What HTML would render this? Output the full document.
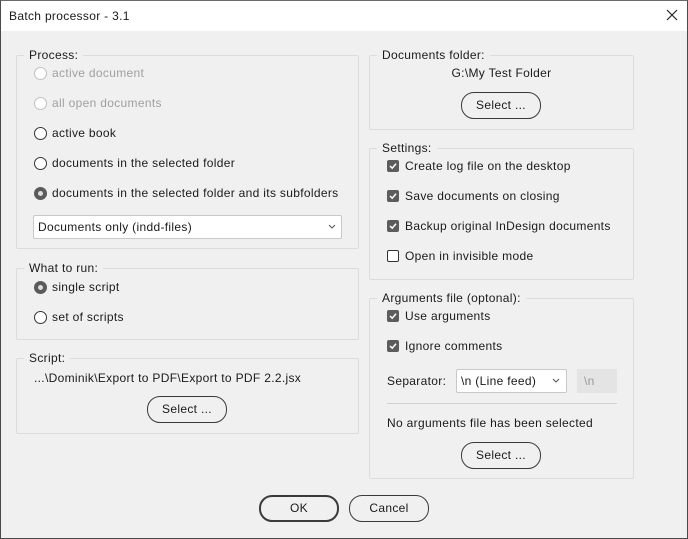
<!DOCTYPE html>
<html><head><meta charset="utf-8"><style>
*{box-sizing:border-box;margin:0;padding:0}
body{width:688px;height:539px;overflow:hidden;background:#f0f0f0;font-family:"Liberation Sans",sans-serif;font-size:12px;letter-spacing:0.32px;color:#1a1a1a;position:relative}
.win{position:absolute;left:0;top:0;width:688px;height:539px;border:1px solid #4a4a4a;border-top-color:#6a6a6a}
.title{position:absolute;left:1px;top:1px;width:686px;height:30px;background:#fff}
.t{position:absolute;white-space:nowrap;line-height:16px}
.box{position:absolute;border:1px solid #dcdcdc;border-radius:2px}
.lbl{position:absolute;background:#f0f0f0;padding:0 5px;line-height:16px;white-space:nowrap}
.rad{position:absolute;width:13px;height:13px;border:1px solid #333;border-radius:50%;background:#fff}
.rad.dis{border-color:#c0c0c0}
.rad.on{background:#5a5a5a;border-color:#5a5a5a}
.rad.on::after{content:"";position:absolute;left:3px;top:3px;width:5px;height:5px;border-radius:50%;background:#dcdcdc}
.chk{position:absolute;width:12px;height:12px;border-radius:2px;background:#5c5c5c}
.chk svg{position:absolute;left:1px;top:1px}
.chk.off{background:#fff;border:1px solid #333}
.btn{position:absolute;border:1px solid #3a3a3a;border-radius:13px;text-align:center;line-height:24px;background:#f0f0f0}
.dd{position:absolute;background:#fff;border:1px solid #c8c8c8;border-radius:2px;line-height:22px;padding-left:4px}
.dis{color:#a0a0a0}
</style></head><body>
<div class="win"></div>
<div class="title"></div>
<div class="t" style="left:9px;top:8px">Batch processor - 3.1</div>
<svg style="position:absolute;left:666px;top:9px" width="12" height="12"><path d="M1 1L11 11M11 1L1 11" stroke="#222" stroke-width="1.2"/></svg>

<div class="box" style="left:16px;top:55px;width:343px;height:194px"></div>
<div class="lbl" style="left:24px;top:47px">Process:</div>
<div class="rad dis" style="left:34px;top:67px"></div><div class="t dis" style="left:52px;top:65px">active document</div>
<div class="rad dis" style="left:34px;top:97px"></div><div class="t dis" style="left:52px;top:95px">all open documents</div>
<div class="rad" style="left:34px;top:127px"></div><div class="t" style="left:52px;top:125px">active book</div>
<div class="rad" style="left:34px;top:157px"></div><div class="t" style="left:52px;top:155px">documents in the selected folder</div>
<div class="rad on" style="left:34px;top:187px"></div><div class="t" style="left:52px;top:185px">documents in the selected folder and its subfolders</div>
<div class="dd" style="left:33px;top:215px;width:309px;height:24px">Documents only (indd-files)</div>
<svg style="position:absolute;left:328px;top:224px" width="8" height="6"><path d="M1 1L4 4L7 1" stroke="#555" fill="none"/></svg>

<div class="box" style="left:16px;top:268px;width:343px;height:72px"></div>
<div class="lbl" style="left:24px;top:260px">What to run:</div>
<div class="rad on" style="left:34px;top:281px"></div><div class="t" style="left:52px;top:279px">single script</div>
<div class="rad" style="left:34px;top:311px"></div><div class="t" style="left:52px;top:309px">set of scripts</div>

<div class="box" style="left:16px;top:358px;width:343px;height:76px"></div>
<div class="lbl" style="left:24px;top:350px">Script:</div>
<div class="t" style="left:34px;top:370px">...\Dominik\Export to PDF\Export to PDF 2.2.jsx</div>
<div class="btn" style="left:147px;top:396px;width:80px;height:27px">Select ...</div>

<div class="box" style="left:369px;top:55px;width:265px;height:75px"></div>
<div class="lbl" style="left:377px;top:47px">Documents folder:</div>
<div class="t" style="left:369px;width:265px;text-align:center;top:65px">G:\My Test Folder</div>
<div class="btn" style="left:461px;top:92px;width:80px;height:27px">Select ...</div>

<div class="box" style="left:369px;top:148px;width:265px;height:132px"></div>
<div class="lbl" style="left:377px;top:140px">Settings:</div>
<div class="chk" style="left:387px;top:160px"><svg width="10" height="10"><path d="M2 5L4.2 7.2L8 2.8" stroke="#fff" stroke-width="1.5" fill="none"/></svg></div><div class="t" style="left:405px;top:158px">Create log file on the desktop</div>
<div class="chk" style="left:387px;top:190px"><svg width="10" height="10"><path d="M2 5L4.2 7.2L8 2.8" stroke="#fff" stroke-width="1.5" fill="none"/></svg></div><div class="t" style="left:405px;top:188px">Save documents on closing</div>
<div class="chk" style="left:387px;top:220px"><svg width="10" height="10"><path d="M2 5L4.2 7.2L8 2.8" stroke="#fff" stroke-width="1.5" fill="none"/></svg></div><div class="t" style="left:405px;top:218px">Backup original InDesign documents</div>
<div class="chk off" style="left:387px;top:250px"></div><div class="t" style="left:405px;top:248px">Open in invisible mode</div>

<div class="box" style="left:369px;top:298px;width:265px;height:181px"></div>
<div class="lbl" style="left:377px;top:290px">Arguments file (optonal):</div>
<div class="chk" style="left:387px;top:310px"><svg width="10" height="10"><path d="M2 5L4.2 7.2L8 2.8" stroke="#fff" stroke-width="1.5" fill="none"/></svg></div><div class="t" style="left:405px;top:308px">Use arguments</div>
<div class="chk" style="left:387px;top:340px"><svg width="10" height="10"><path d="M2 5L4.2 7.2L8 2.8" stroke="#fff" stroke-width="1.5" fill="none"/></svg></div><div class="t" style="left:405px;top:338px">Ignore comments</div>
<div class="t" style="left:387px;top:373px">Separator:</div>
<div class="dd" style="left:456px;top:369px;width:111px;height:24px">\n (Line feed)</div>
<svg style="position:absolute;left:552px;top:378px" width="8" height="6"><path d="M1 1L4 4L7 1" stroke="#555" fill="none"/></svg>
<div style="position:absolute;left:577px;top:369px;width:40px;height:24px;background:#e4e4e4"></div>
<div class="t dis" style="left:584px;top:373px;color:#999">\n</div>
<div style="position:absolute;left:387px;top:403px;width:230px;height:1px;background:#d0d0d0"></div>
<div class="t" style="left:387px;top:415px">No arguments file has been selected</div>
<div class="btn" style="left:461px;top:442px;width:80px;height:27px">Select ...</div>

<div class="btn" style="left:259px;top:495px;width:80px;height:27px;border-width:2px;line-height:23px">OK</div>
<div class="btn" style="left:349px;top:495px;width:80px;height:27px">Cancel</div>
</body></html>
